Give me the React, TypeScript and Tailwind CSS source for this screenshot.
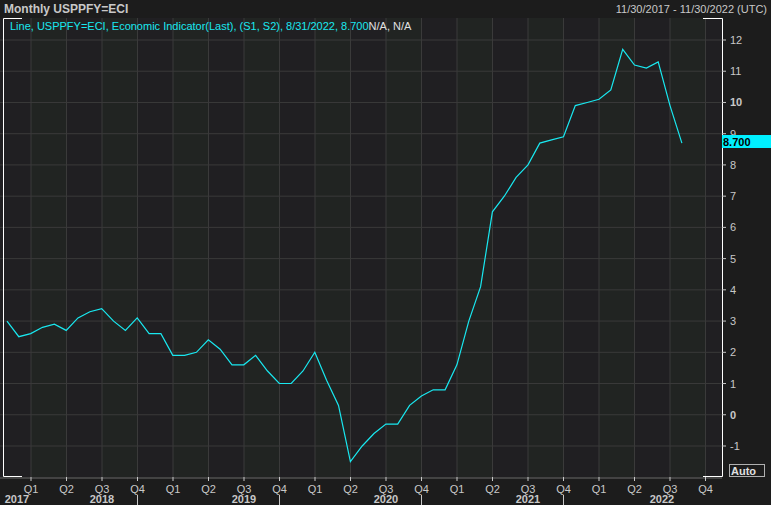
const data = [3.0,2.5,2.6,2.8,2.9,2.7,3.1,3.3,3.4,3.0,2.7,3.1,2.6,2.6,1.9,1.9,2.0,2.4,2.1,1.6,1.6,1.9,1.4,1.0,1.0,1.4,2.0,1.1,0.3,-1.5,-1.0,-0.6,-0.3,-0.3,0.3,0.6,0.8,0.8,1.6,3.0,4.1,6.5,7.0,7.6,8.0,8.7,8.8,8.9,9.9,10.0,10.1,10.4,11.7,11.2,11.1,11.3,9.9,8.7];

const yOf = (v: number) => 40 + (12 - v) * 31.23;
const xOf = (i: number) => 7 + i * 11.84;
const qx = (q: number) => 31 + q * 35.5; // q=0 -> Q1 2018

const font = "'Liberation Sans', Arial, sans-serif";

export default function App() {
  const pts = data.map((v, i) => `${xOf(i).toFixed(1)},${yOf(v).toFixed(1)}`).join(" ");
  const quarters = Array.from({ length: 20 }, (_, q) => q);
  const levels = Array.from({ length: 14 }, (_, k) => 12 - k);
  const years = [
    { label: "2017", x: 17 },
    { label: "2018", x: 102 },
    { label: "2019", x: 244 },
    { label: "2020", x: 386 },
    { label: "2021", x: 528 },
    { label: "2022", x: 662 },
  ];
  return (
    <div className="w-[771px] h-[505px] bg-[#1c1c1c] overflow-hidden" style={{ fontFamily: font }}>
      <div className="h-[18px] flex items-center justify-between px-[4px] text-[12px] text-[#c8c8c8]">
        <span className="font-bold">Monthly USPPFY=ECI</span>
        <span className="text-[11px]">11/30/2017 - 11/30/2022 (UTC)</span>
      </div>
      <svg width="771" height="487" viewBox="0 18 771 487" className="block">
        <rect x="0" y="18" width="722" height="459" fill="#201f22" />
        {quarters.filter((q) => q % 2 === 1).map((q) => (
          <rect key={q} x={qx(q - 1)} y="18" width="35.5" height="459" fill="#212422" />
        ))}
        {quarters.map((q) => (
          <line key={q} x1={qx(q)} x2={qx(q)} y1="18" y2="477" stroke="#3a3a3a" />
        ))}
        {levels.map((v) => (
          <line key={v} x1="0" x2="722" y1={yOf(v)} y2={yOf(v)} stroke="#3a3a3a" />
        ))}
        <polyline points={pts} fill="none" stroke="#19e8f0" strokeWidth="1.2" />
        {/* frame brackets */}
        <path d="M22,18.5 H3.5 V476.5 H22" fill="none" stroke="#fff" />
        <path d="M703,18.5 H722.5 V476.5 H703" fill="none" stroke="#fff" />
        <line x1="0" x2="722" y1="478" y2="478" stroke="#6a6a6a" />
        {/* legend */}
        <text x="10" y="30" fontSize="11" fill="#19e8f0" fontFamily={font}>
          Line, USPPFY=ECI, Economic Indicator(Last), (S1, S2), 8/31/2022, 8.700
          <tspan fill="#e0e0e0">N/A, N/A</tspan>
        </text>
        {/* right axis */}
        {levels.map((v) => (
          <g key={v}>
            <line x1="722" x2="726" y1={yOf(v)} y2={yOf(v)} stroke="#c8c8c8" />
            <text
              x="730"
              y={yOf(v) + 4}
              fontSize="11"
              fill="#c8c8c8"
              fontWeight={v === 10 || v === 0 ? "bold" : "normal"}
              fontFamily={font}
            >
              {v}
            </text>
          </g>
        ))}
        <rect x="722" y="135" width="49" height="13" fill="#00f0ff" />
        <text x="723" y="146" fontSize="11" fontWeight="bold" fill="#000" fontFamily={font}>8.700</text>
        <rect x="729.5" y="464.5" width="35" height="12" fill="#1c1c1c" stroke="#b0b0b0" />
        <text x="731" y="475" fontSize="11" fontWeight="bold" fill="#e0e0e0" fontFamily={font}>Auto</text>
        {/* bottom axis */}
        {quarters.map((q) => (
          <g key={q}>
            <line x1={qx(q)} x2={qx(q)} y1="477" y2="481" stroke="#c8c8c8" />
            <text x={qx(q)} y="493" fontSize="11" fill="#c8c8c8" textAnchor="middle" fontFamily={font}>
              Q{(q % 4) + 1}
            </text>
          </g>
        ))}
        {[-1, 3, 7, 11, 15].map((q) => (
          <line key={q} x1={qx(q)} x2={qx(q)} y1="495" y2="505" stroke="#c8c8c8" />
        ))}
        {years.map((y) => (
          <text key={y.label} x={y.x} y="503" fontSize="11" fontWeight="bold" fill="#c8c8c8" textAnchor="middle" fontFamily={font}>
            {y.label}
          </text>
        ))}
      </svg>
    </div>
  );
}
